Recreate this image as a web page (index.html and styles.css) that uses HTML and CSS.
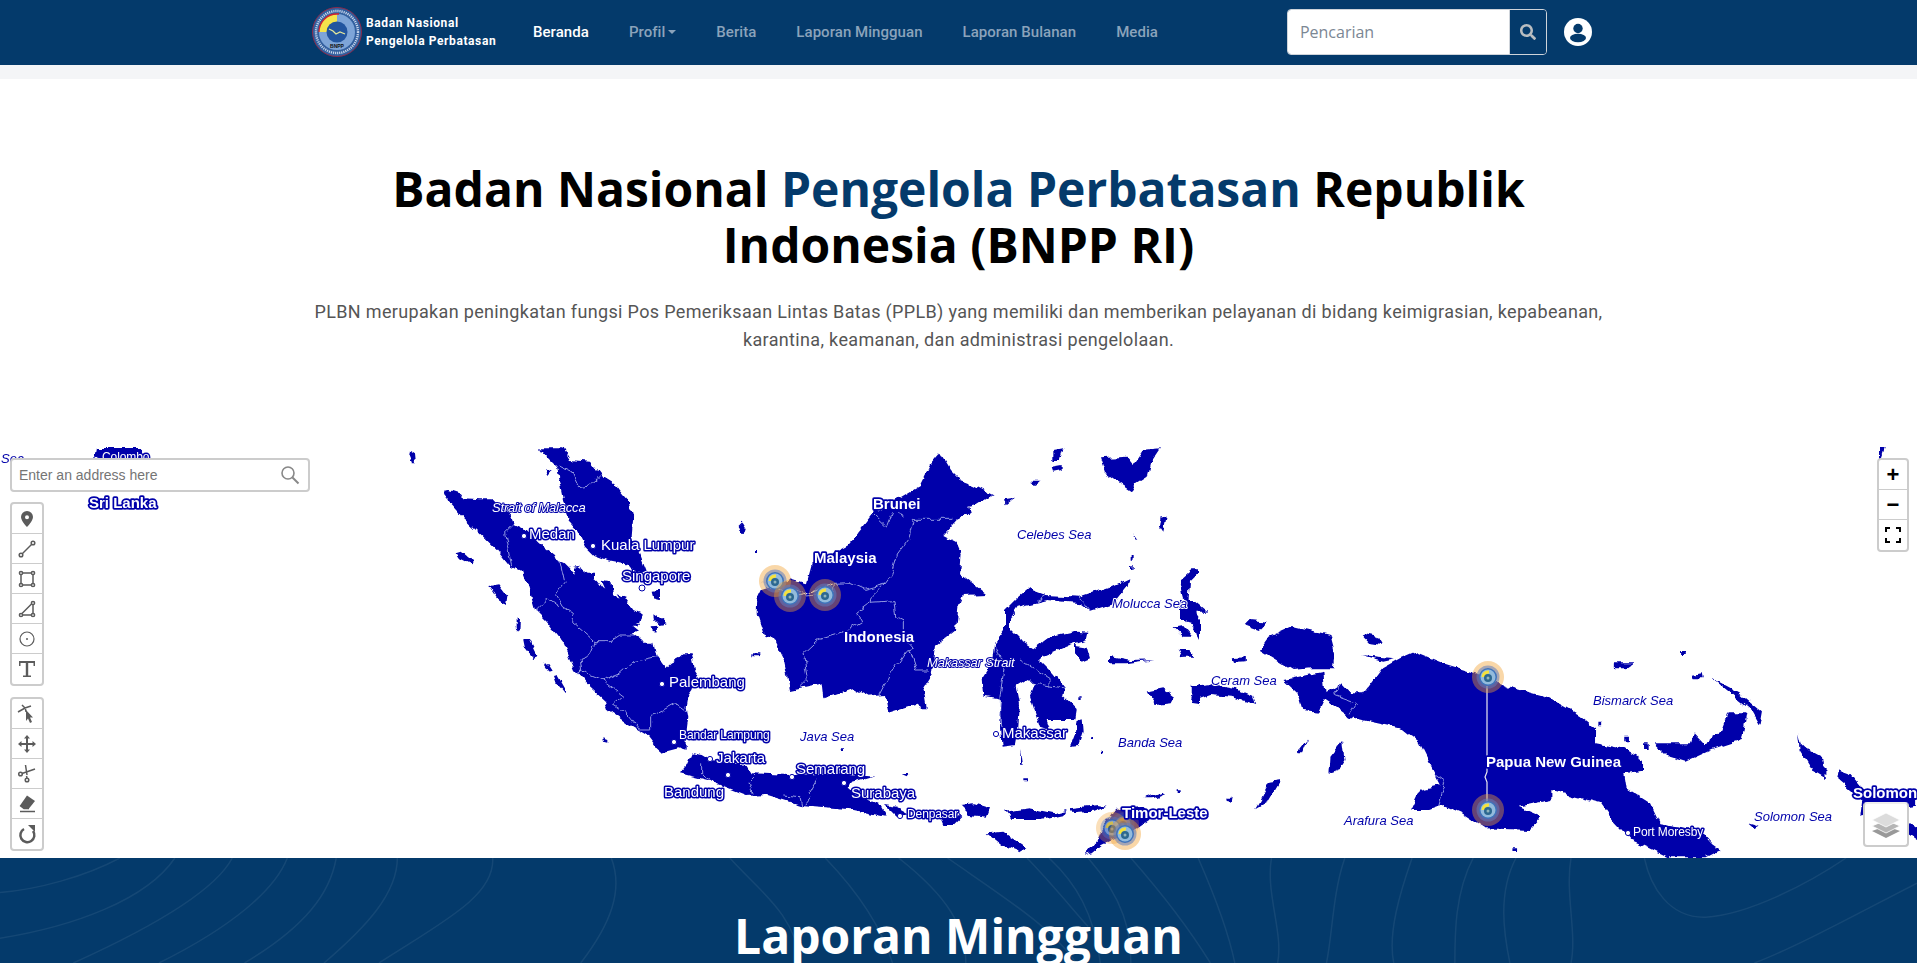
FILE: index.html
```html
<!DOCTYPE html>
<html lang="en">
<head>
  <meta charset="UTF-8" />
  <title>BNPP RI</title>
  <link rel="stylesheet" href="styles.css">
</head>
<body>
  <nav class="navbar">
    <div class="nav-inner">
      <a class="brand">
        <svg class="logo" viewBox="0 0 50 50">
          <circle cx="25" cy="25" r="24.500" fill="#33609f" stroke="#8c2a4a" stroke-width="1"/>
          <circle cx="25" cy="25" r="21" fill="none" stroke="#c4d3ea" stroke-width="2.400" stroke-dasharray="1.200 .9"/>
          <circle cx="25" cy="25" r="18" fill="#7ea5d8"/>
          <path d="M25 25V7A18 18 0 0 0 7 25Z" fill="#f4e44c"/>
          <path d="M7 25A18 18 0 0 1 25 7H27" fill="none" stroke="#cf2231" stroke-width="1.300"/>
          <circle cx="25" cy="25" r="10.500" fill="#22559f"/>
          <path d="M17 22l4 2 3 3 4-2 5 2" fill="none" stroke="#e4e79a" stroke-width="1.300"/>
          <text x="25" y="41" class="logo-txt">BNPP</text>
        </svg>
        <span class="brand-text">Badan Nasional<br>Pengelola Perbatasan</span>
      </a>
      <ul class="nav-links">
        <li class="active">Beranda</li>
        <li class="caret">Profil</li>
        <li>Berita</li>
        <li>Laporan Mingguan</li>
        <li>Laporan Bulanan</li>
        <li>Media</li>
      </ul>
      <form class="search">
        <input type="text" placeholder="Pencarian">
        <button type="button" aria-label="Cari">
          <svg viewBox="0 0 512 512" width="16" height="16"><path fill="#b9bdc0" d="M505 442.700L405.300 343c-4.500-4.500-10.600-7-17-7H372c27.600-35.300 44-79.700 44-128C416 93.100 322.900 0 208 0S0 93.100 0 208s93.100 208 208 208c48.300 0 92.700-16.400 128-44v16.300c0 6.400 2.500 12.500 7 17l99.700 99.700c9.400 9.400 24.600 9.400 33.900 0l28.300-28.300c9.400-9.400 9.400-24.600.1-34zM208 336c-70.700 0-128-57.200-128-128 0-70.700 57.200-128 128-128 70.700 0 128 57.200 128 128 0 70.700-57.200 128-128 128z"/></svg>
        </button>
      </form>
      <svg class="user" viewBox="0 0 28 28">
        <circle cx="14" cy="14" r="14" fill="#fff"/>
        <circle cx="14" cy="10.500" r="4.700" fill="#043a6b"/>
        <ellipse cx="14" cy="20" rx="8" ry="4.200" fill="#043a6b"/>
      </svg>
    </div>
  </nav>
  <div class="band"></div>

  <section class="intro">
    <h1>Badan Nasional <span>Pengelola Perbatasan</span> Republik Indonesia (BNPP RI)</h1>
    <p>PLBN merupakan peningkatan fungsi Pos Pemeriksaan Lintas Batas (PPLB) yang memiliki dan memberikan pelayanan di bidang keimigrasian, kepabeanan, karantina, keamanan, dan administrasi pengelolaan.</p>
  </section>

  <section class="map">
    <svg class="map-canvas" viewBox="0 447 1917 411">
      <defs>
        <filter id="coast" filterUnits="userSpaceOnUse" x="0" y="447" width="1917" height="411">
          <feTurbulence type="fractalNoise" baseFrequency=".09" numOctaves="3" seed="4"/>
          <feDisplacementMap in="SourceGraphic" scale="7" xChannelSelector="R" yChannelSelector="G"/>
        </filter>
        <g id="pin">
          <circle r="16" fill="#f0a030" fill-opacity=".42"/>
          <circle r="11.500" fill="#5f7cc0" fill-opacity=".55"/>
          <circle r="9" fill="#3f74bc"/>
          <circle r="7.500" fill="#93bbdc"/>
          <path d="M-6.500 0A6.500 6.500 0 0 1 1-6.500V-3.500A3.500 3.500 0 0 0-3 0Z" fill="#f5e23c"/>
          <circle cy="1" r="4" fill="#2c6890"/>
          <circle cy="1" r="1.500" fill="#8fb4bc"/>
        </g>
      </defs>

      <g filter="url(#coast)">
        <!-- sumatra, malaya, java -->
        <g transform="translate(400 440) scale(.33333)">
          <path class="land" d="M135 152L150 150 180 160 190 175 240 178 275 178 300 205 335 225 345 250 375 265 420 310 465 345 470 358 490 365 510 385 525 405 520 380 535 378 560 395 590 420 610 445 640 465 680 480 700 510 722 520 715 545 695 555 720 575 695 580 730 605 760 605 770 650 795 685 815 665 835 655 850 640 875 640 885 690 895 705 880 750 865 770 860 800 865 830 860 870 860 932 835 925 785 938 770 925 740 885 680 850 625 810 615 780 560 730 525 690 490 610 440 545 405 510 385 440 370 400 330 380 290 330 250 290 190 235 150 190Z"/>
          <path class="land" d="M420 25L490 25 510 60 570 65 600 105 640 130 690 190 700 230 695 290 720 345 740 395 720 400 670 370 620 360 580 345 555 320 530 270 505 240 500 210 490 170 480 120 470 80 440 50Z"/>
          <path class="land" d="M875 940L905 945 930 960 1040 975 1055 1000 1170 1005 1330 1000 1420 1010 1350 1030 1340 1050 1440 1095 1460 1130 1350 1108 1200 1095 1100 1065 1040 1068 980 1045 920 1020 840 1000 860 975Z"/>
          <path class="land" d="M170 340L185 335 222 365 215 373 180 355ZM265 435L295 430 322 465 318 495 295 480ZM370 600L390 600 415 650 400 657 375 625ZM432 675L442 672 455 692 445 695ZM462 708L472 705 495 745 495 760 470 730ZM350 535L360 540 358 572 350 565ZM30 30L45 40 48 70 38 70 28 45ZM1010 260L1025 245 1037 265 1030 285 1015 275ZM760 520L775 530 800 550 775 555 762 540ZM755 562L775 560 772 578 758 576ZM560 395L582 395 582 415 565 420ZM605 425L635 430 640 470 620 460ZM650 460L680 470 670 490ZM690 550L720 548 715 560 695 560ZM755 455L780 452 780 480 760 475ZM610 895L625 900 625 908 612 905ZM435 85L455 95 445 108Z"/>
          <path class="line" d="M475 75L515 95 535 140 570 135 600 110M345 250L315 280 335 380M480 360L495 430 470 465 490 500 520 520 515 545 585 605 630 605 660 585 700 585M585 605L575 640 540 655 545 690 530 700M540 690L610 720 660 700 700 665 770 650M605 720L670 770 640 795 680 820 720 870 755 870 755 830 830 790 865 815M405 515L445 475 480 500M905 970L905 1005 930 1020M1050 1020L1065 1005M1050 1025L1060 1060M1225 1065L1255 1015M1150 1065L1200 1070 1205 1095M1210 1095L1230 1070"/>
        </g>

        <!-- borneo, sulawesi, sunda islands -->
        <g transform="translate(700 440) scale(.33333)">
          <path class="land" d="M172 478L185 450 230 435 270 415 320 430 335 375 385 345 450 310 490 260 525 215 610 165 660 135 690 75 720 40 750 90 780 120 820 135 878 165 830 195 805 200 810 220 770 240 730 285 770 305 785 340 780 400 858 462 790 465 775 505 768 570 705 620 695 700 670 740 680 805 660 805 655 790 565 818 555 765 500 770 455 745 370 775 365 730 270 750 250 650 225 600 190 580 170 520Z"/>
          <path class="land" d="M985 445L1040 465 1140 470 1230 440 1285 415 1280 440 1240 490 1170 512 1140 490 1040 480 1000 490 950 500 930 530 930 570 960 600 1000 625 1040 595 1130 575 1165 578 1160 600 1100 620 1030 650 1020 660 1060 700 1095 745 1090 770 1130 810 1125 840 1040 840 1050 870 1020 860 990 770 1005 730 990 715 950 740 960 790 955 860 945 915 905 920 900 860 905 780 850 770 845 715 880 660 885 610 915 570 915 510 950 475Z"/>
          <path class="land" d="M1130 840L1145 835 1148 875 1135 915 1110 918 1125 880ZM1200 55L1280 50 1300 75 1330 30 1380 25 1350 70 1340 110 1310 130 1295 155 1250 125 1215 100ZM1060 30L1090 25 1080 60 1060 60ZM1055 80L1085 75 1085 90 1060 95ZM990 125L1025 125 1005 135ZM1230 648L1290 660 1360 658 1280 670 1230 670ZM1340 755L1390 745 1425 770 1415 790 1370 795ZM1125 615L1160 620 1170 655 1145 665 1125 640ZM1420 560L1450 555 1480 590 1450 590ZM1430 630L1465 630 1485 650 1440 650ZM1440 420L1480 385 1500 385 1500 395 1470 425 1465 490 1500 540 1500 600 1470 540 1450 470ZM860 1180L910 1175 985 1225 960 1240 910 1220ZM555 1095L590 1100 625 1120 590 1130ZM605 1005L625 1005 620 1012ZM780 1095L820 1090 870 1105 860 1130 810 1125ZM720 1130L790 1125 760 1155 730 1155ZM915 1115L990 1105 1060 1120 1100 1110 1090 1125 1020 1140 935 1140ZM1110 1105L1190 1095 1220 1100 1180 1115 1120 1120ZM1330 1075L1390 1055 1395 1060 1360 1075ZM1155 1245L1190 1205 1205 1170 1245 1110 1330 1100 1360 1130 1310 1165 1270 1185 1205 1215 1175 1240ZM1385 225L1400 230 1390 275 1380 260ZM1300 280L1315 300 1308 298ZM915 175L945 170 920 190ZM1480 740L1500 730 1500 790 1470 785ZM960 930L966 975 960 970Z"/>
          <path class="land" d="M1295 345h6v14h-6zM1293 375h5v14h-5zM1135 775h10v8h-10zM970 1015h14v6h-14zM1430 1048h9v8h-9zM1170 895h6v8h-6zM1200 935h6v8h-6zM165 330h6v8h-6zM160 640h15v6h-15zM425 925h10v8h-10z"/>
          <path class="line" d="M525 225L560 258 575 220M595 215L610 238M640 238L760 238M640 238L625 300 592 345 575 405 555 432 495 448 450 428 400 430 395 460 320 468 290 450M555 432L515 470 510 490 470 520 485 545 435 575 355 600 312 640 325 715 300 740M510 490L585 485 590 530 610 540 610 590 640 625 620 632 575 700 540 765M630 630L650 690 690 690M1010 485L1040 465M1140 470L1170 510M890 620L912 690 900 770 905 860M960 660L1050 715 1050 740M1005 730L1095 745"/>
          <path class="line-bright" d="M290 468L320 462 395 432M180 430L225 440 270 468"/>
        </g>

        <!-- papua, pacific islands -->
        <g transform="translate(1180 600) scale(.4701 .33333)">
          <path class="land" d="M468 175L500 155 560 190 640 225 700 260 780 290 850 345 885 385 885 430 940 445 985 480 985 512 945 520 950 565 1000 610 1020 670 1105 690 1130 730 1150 750 1120 772 1040 772 1000 745 960 720 920 660 895 610 840 590 790 570 790 600 720 620 770 650 745 690 650 685 600 640 560 615 530 630 490 630 510 570 555 555 535 500 510 430 470 385 420 370 360 350 320 310 300 290 345 250 365 280 390 280 430 205Z"/>
          <path class="land" d="M170 150L190 110 240 78 320 105 330 160 325 205 280 205 240 210ZM220 240L270 225 305 215 310 290 295 335 260 330 250 280ZM25 255L60 250 120 265 155 285 162 315 110 290 65 285 25 305ZM110 175L140 172 140 190 115 192ZM320 470L345 425 350 480 330 525 318 520ZM250 460L275 415 262 460ZM170 600L190 545 215 540 190 600 160 625ZM1010 430L1090 430 1095 400 1115 430 1150 395 1165 340 1205 340 1195 420 1130 450 1075 485 1040 470ZM1130 235L1190 280 1240 340 1235 380 1215 330 1170 280ZM1315 400L1320 430 1375 505 1375 525 1340 500 1318 450ZM1402 508L1425 520 1460 580 1450 600 1420 550ZM1090 225L1110 220 1112 235 1095 235ZM925 190L965 190 950 205 925 205ZM385 100L420 110 430 135 405 130ZM385 165L455 175 430 182ZM150 60L185 65 170 90 140 75ZM0 150L30 160 0 172ZM0 0L30 0 60 35 35 35 40 110 15 60 0 60ZM100 590L112 590 110 605 102 603ZM1210 670L1235 680 1225 688ZM1450 590L1568 580 1568 620 1480 640 1445 650Z"/>
          <path class="land" d="M1068 150h10v12h-10zM945 410h10v14h-10zM985 430h12v20h-12zM890 365h8v14h-8zM705 745h12v8h-12z"/>
          <path class="line" d="M345 250L325 285 375 310 362 340M540 520L565 545 550 620"/>
        </g>

        <path class="land" d="M96 448H141L143 460H94Z"/>
        <path class="land" d="M1880 447H1885L1880 462ZM1800 745L1822 757 1825 778 1815 772ZM1840 770L1890 810 1917 830 1917 840 1880 815 1838 780Z"/>
      </g>
      <path class="line-bright" d="M1487 686V772L1485 777 1487 782V806"/>

      <g class="dots">
        <circle cx="524" cy="536" r="2.600"/><circle cx="593" cy="546" r="2.600"/><circle cx="642" cy="588" r="3"/>
        <circle cx="662" cy="684" r="2.600"/><circle cx="674" cy="742" r="2.600"/><circle cx="710" cy="759" r="2.600"/>
        <circle cx="728" cy="775" r="2.600"/><circle cx="792" cy="777" r="2.600"/><circle cx="844" cy="783" r="2.600"/>
        <circle cx="900" cy="816" r="2.600"/><circle cx="996" cy="734" r="2.600"/><circle cx="1628" cy="833" r="2.600"/>
        <circle cx="96" cy="459" r="2.600"/>
      </g>

      <use href="#pin" x="775" y="581"/><use href="#pin" x="790" y="596"/><use href="#pin" x="825" y="595"/>
      <use href="#pin" x="1123" y="824" opacity=".55"/><use href="#pin" x="1112" y="828" opacity=".8"/><use href="#pin" x="1125" y="834"/>
      <use href="#pin" x="1488" y="677"/><use href="#pin" x="1488" y="810"/>

      <g class="lbl city">
        <text x="529" y="539">Medan</text><text x="601" y="550">Kuala Lumpur</text><text x="622" y="581">Singapore</text>
        <text x="669" y="687">Palembang</text><text x="716" y="763">Jakarta</text><text x="664" y="797">Bandung</text>
        <text x="796" y="774">Semarang</text><text x="851" y="798">Surabaya</text><text x="1002" y="738">Makassar</text>
      </g>
      <g class="lbl city small">
        <text x="679" y="739">Bandar Lampung</text><text x="907" y="818">Denpasar</text><text x="1633" y="836">Port Moresby</text><text x="102" y="461">Colombo</text>
      </g>
      <g class="lbl country">
        <text x="814" y="563">Malaysia</text><text x="873" y="509">Brunei</text><text x="844" y="642">Indonesia</text>
        <text x="1122" y="818">Timor-Leste</text><text x="1486" y="767">Papua New Guinea</text><text x="1853" y="798">Solomon</text><text x="89" y="508">Sri Lanka</text>
      </g>
      <g class="lbl sea">
        <text x="800" y="741">Java Sea</text><text x="1017" y="539">Celebes Sea</text><text x="1112" y="608">Molucca Sea</text>
        <text x="1118" y="747">Banda Sea</text><text x="1211" y="685">Ceram Sea</text><text x="1593" y="705">Bismarck Sea</text>
        <text x="1344" y="825">Arafura Sea</text><text x="1754" y="821">Solomon Sea</text><text x="1" y="463">Sea</text>
      </g>
      <g class="lbl strait">
        <text x="492" y="512">Strait of Malacca</text><text x="927" y="667">Makassar Strait</text>
      </g>
    </svg>

    <div class="geocoder">
      <span>Enter an address here</span>
      <svg viewBox="0 0 20 20" width="20" height="20"><circle cx="8" cy="8" r="6" fill="none" stroke="#888" stroke-width="1.600"/><path d="M12.500 12.500L18.500 18.500" stroke="#888" stroke-width="2"/></svg>
    </div>

    <div class="tools">
      <div class="tool-group">
        <button><svg viewBox="0 0 20 20"><path class="ic" fill-rule="evenodd" d="M10 2a6 6 0 0 1 6 6c0 4-6 10-6 10S4 12 4 8a6 6 0 0 1 6-6zm0 4.200a2 2 0 1 0 0 4 2 2 0 0 0 0-4z"/></svg></button>
        <button><svg viewBox="0 0 20 20"><g class="ic-line"><path d="M5 15L15 5"/><circle cx="4" cy="16" r="1.800"/><circle cx="16" cy="4" r="1.800"/></g></svg></button>
        <button><svg viewBox="0 0 20 20"><g class="ic-line"><path d="M4 5V15M5 4H15M16 5V15M5 16H15"/><circle cx="4" cy="4" r="1.600"/><circle cx="16" cy="4" r="1.600"/><circle cx="4" cy="16" r="1.600"/><circle cx="16" cy="16" r="1.600"/></g></svg></button>
        <button><svg viewBox="0 0 20 20"><g class="ic-line"><path d="M5 14.500L14.500 5M5.500 16H14.500M16 5.500V14.500"/><circle cx="4" cy="16" r="1.600"/><circle cx="16" cy="4" r="1.600"/><circle cx="16" cy="16" r="1.600"/></g></svg></button>
        <button><svg viewBox="0 0 20 20"><circle class="ic-thin" cx="10" cy="10" r="7"/><circle class="ic" cx="10" cy="10" r="1"/></svg></button>
        <button><svg viewBox="0 0 20 20"><path class="ic" d="M2 2H18V7H16.500V4H11.200V16.500H14V18H6V16.500H8.800V4H3.500V7H2Z"/></svg></button>
      </div>
      <div class="tool-group">
        <button><svg viewBox="0 0 20 20"><path class="ic-line" d="M1 8L8 4 14 2M8 4L5 1M8.500 5L9 8"/><path class="ic" d="M9 6L16 13.500H13L15 18 13 19 11 14.500 9 17Z"/></svg></button>
        <button><svg viewBox="0 0 20 20"><path class="ic" d="M10 1L13 4.500H11V9H15.500V7L19 10 15.500 13V11H11V15.500H13L10 19 7 15.500H9V11H4.500V13L1 10 4.500 7V9H9V4.500H7Z"/></svg></button>
        <button><svg viewBox="0 0 20 20"><g class="ic-line"><path d="M8.500 1L10 11M5 9.500L18 5M9.500 12L10 14"/><circle cx="3.500" cy="10" r="1.800"/><circle cx="10" cy="16" r="1.800"/></g></svg></button>
        <button><svg viewBox="0 0 20 20"><path class="ic" d="M10 1.500L18 7 12 14.500H7L3 11.500Z"/><path class="ic-line" d="M3 11.500L7 14.500H12M3 17.500H18"/></svg></button>
        <button><svg viewBox="0 0 20 20"><path class="ic-undo" d="M7 5A7 7 0 1 0 16 7"/><path class="ic" d="M11 1H18V8Z"/></svg></button>
      </div>
    </div>

    <div class="zoom-ctl">
      <button>+</button>
      <button>&minus;</button>
      <button><svg viewBox="0 0 16 16" width="16" height="16"><path d="M1 5V1H5M11 1H15V5M15 11V15H11M5 15H1V11" fill="none" stroke="#000" stroke-width="2"/></svg></button>
    </div>

    <div class="layers">
      <svg viewBox="0 0 28 26" width="28" height="26">
        <path d="M14 14L28 19 14 26 0 19Z" fill="#999"/>
        <path d="M14 8L28 14 14 21 0 14Z" fill="#b5b5b5" stroke="#fff" stroke-width=".8"/>
        <path d="M14 1L28 8 14 15 0 8Z" fill="#dcdcdc" stroke="#fff" stroke-width=".8"/>
      </svg>
    </div>
  </section>

  <section class="weekly">
    <svg class="contours" viewBox="0 55 1568 314" preserveAspectRatio="none">
      <path d="M0 158C30 150 70 110 98 55M0 295C60 260 120 180 143 55M60 369C120 270 175 160 190 55M130 369C190 260 225 150 235 55M200 369C250 260 270 160 275 55M265 369C300 260 325 160 325 55M310 369C360 250 405 170 403 55M475 369C500 250 510 150 500 55M597 55C620 150 650 220 655 369M675 55C700 150 720 250 730 369M735 55C775 170 790 260 790 369M775 55C820 170 860 260 880 369M840 55C860 130 880 220 890 260M858 55C880 130 895 220 900 369M890 55C920 180 925 280 925 369M925 55C955 180 975 280 990 369M980 55C995 180 1005 280 1010 369M1040 55C1035 160 1050 280 1045 369M1100 55C1090 160 1090 280 1085 369M1155 55C1145 160 1135 280 1140 369M1205 55C1190 160 1190 280 1190 369M1240 55C1225 160 1230 280 1235 369M1285 55C1280 160 1290 280 1285 369M1345 55C1350 140 1365 235 1395 232C1430 225 1480 130 1510 55M1568 130C1520 220 1470 320 1435 369"/>
    </svg>
    <h2>Laporan Mingguan</h2>
  </section>
</body>
</html>
```

FILE: styles.css
```css
html, body {
  margin: 0;
  height: 963px;
  overflow: hidden;
}

body {
  font-family: Roboto, Arial, sans-serif;
  background-color: white;
}

.navbar {
  height: 65px;
  background-color: #043a6b;
}

.nav-inner {
  width: 1293px;
  height: 64px;
  margin-left: 312px;
  display: flex;
  align-items: center;
}

.brand {
  display: flex;
  align-items: center;
  gap: 4px;
  width: 221px;
  flex: none;
}

.logo {
  width: 50px;
  height: 50px;
}

.logo-txt {
  font: bold 5px "Liberation Sans", sans-serif;
  fill: #111;
  text-anchor: middle;
}

.brand-text {
  color: white;
  font-size: 12px;
  font-weight: 700;
  line-height: 18px;
  letter-spacing: .6px;
  white-space: nowrap;
}

.nav-links {
  display: flex;
  gap: 40px;
  margin: 0;
  padding: 0;
  list-style: none;
  font-size: 15px;
  color: #8ba3bb;
  font-weight: 500;
  letter-spacing: .05px;
  white-space: nowrap;
}

.nav-links .active {
  color: white;
}

.caret::after {
  content: "";
  display: inline-block;
  margin-left: 3px;
  vertical-align: 3px;
  border-top: 4px solid #8ba3bb;
  border-left: 4px solid transparent;
  border-right: 4px solid transparent;
}

.search {
  display: flex;
  width: 260px;
  height: 46px;
  margin-left: 129px;
  flex: none;
  border: 1px solid #cfd4da;
  border-radius: 4px;
  box-sizing: border-box;
  overflow: hidden;
}

.search input {
  flex: 1;
  width: 100px;
  padding: 0 12px;
  border: none;
  font: 16px "Open Sans", sans-serif;
  outline: none;
}

.search input::placeholder {
  color: #7b8794;
}

.search button {
  width: 37px;
  padding: 0;
  border: none;
  background-color: #043a6b;
  display: flex;
  align-items: center;
  justify-content: center;
  border-left: 1px solid #cfd4da;
}

.user {
  width: 28px;
  height: 28px;
  margin-left: 17px;
  flex: none;
}

.band {
  height: 14px;
  background-color: #f4f5f7;
}

.intro {
  height: 368px;
  box-sizing: border-box;
  padding-top: 82px;
  text-align: center;
}

h1 {
  width: 1240px;
  margin: 0 auto;
  font: bold 48px/56px "Open Sans", sans-serif;
  color: black;
}

h1 span {
  color: #043a6b;
}

.intro p {
  width: 1300px;
  margin: 25px auto 0;
  font-size: 18px;
  line-height: 27.5px;
  color: #555;
  letter-spacing: .34px;
}

.map {
  position: relative;
  height: 411px;
  overflow: hidden;
}

.map-canvas {
  display: block;
  width: 1917px;
  height: 411px;
}

.land {
  fill: #0000aa;
}

.line, .line-bright {
  fill: none;
  stroke: #b8c0f0;
  vector-effect: non-scaling-stroke;
  stroke-width: .8px;
}

.line-bright {
  stroke: #eceaf2;
  stroke-width: 1.2px;
}

.dots circle {
  fill: white;
  stroke: #0000aa;
  stroke-width: 1px;
}

.lbl text {
  font-family: "Liberation Sans", Arial, sans-serif;
  paint-order: stroke;
  stroke-linejoin: round;
}

.city text {
  font-size: 15px;
  fill: white;
  stroke: #0000aa;
  stroke-width: 3px;
}

.city.small text {
  font-size: 12px;
  letter-spacing: -.1px;
}

.country text {
  font-size: 15px;
  font-weight: bold;
  fill: white;
  stroke: #0000aa;
  stroke-width: 3.5px;
}

.sea text {
  font-size: 13px;
  font-style: italic;
  fill: #0000aa;
  stroke: white;
  stroke-width: 2px;
}

.strait text {
  font-size: 13px;
  font-style: italic;
  fill: white;
  stroke: #0000aa;
  stroke-width: 2px;
  letter-spacing: -.2px;
}

.geocoder {
  position: absolute;
  left: 10px;
  top: 11px;
  width: 300px;
  height: 34px;
  box-sizing: border-box;
  display: flex;
  align-items: center;
  justify-content: space-between;
  padding: 0 8px 0 7px;
  background-color: white;
  border: 2px solid #ccc;
  border-radius: 4px;
  font: 14px "Liberation Sans", Arial, sans-serif;
  color: #757575;
}

.tools {
  position: absolute;
  left: 10px;
  top: 55px;
  display: flex;
  flex-direction: column;
  gap: 11px;
}

.tool-group, .zoom-ctl {
  width: 34px;
  box-sizing: border-box;
  display: flex;
  flex-direction: column;
  background-color: white;
  border: 2px solid #ccc;
  border-radius: 4px;
}

.tool-group button, .zoom-ctl button {
  width: 100%;
  height: 30px;
  padding: 0;
  border: none;
  border-bottom: 1px solid #ccc;
  background: none;
  display: flex;
  align-items: center;
  justify-content: center;
}

.tool-group button:last-child, .zoom-ctl button:last-child {
  border-bottom: none;
}

.tool-group svg {
  width: 20px;
  height: 20px;
}

.ic {
  fill: #5b5b5b;
}

.ic-line, .ic-thin, .ic-undo {
  fill: none;
  stroke: #5b5b5b;
  stroke-width: 1.5;
}

.ic-thin {
  stroke-width: 1.2;
}

.ic-undo {
  stroke-width: 2.5;
}

.zoom-ctl {
  position: absolute;
  right: 8px;
  top: 11px;
  width: 32px;
}

.zoom-ctl button {
  font: bold 22px "Liberation Sans", Arial, sans-serif;
  color: black;
}

.layers {
  position: absolute;
  right: 8px;
  bottom: 11px;
  width: 46px;
  height: 45px;
  box-sizing: border-box;
  display: flex;
  align-items: center;
  justify-content: center;
  background-color: white;
  border: 2px solid #ccc;
  border-top-color: #eee;
  border-radius: 4px;
}

.weekly {
  position: relative;
  height: 105px;
  overflow: hidden;
  background-color: #043a6b;
}

.contours {
  position: absolute;
  left: 0;
  top: 0;
  width: 100%;
  height: 100%;
}

.contours path {
  fill: none;
  stroke: rgba(255, 255, 255, .07);
  stroke-width: 1.5px;
  vector-effect: non-scaling-stroke;
}

.weekly h2 {
  position: relative;
  margin: 46px 0 0;
  text-align: center;
  font: bold 48px/64px "Open Sans", sans-serif;
  color: white;
}
```
